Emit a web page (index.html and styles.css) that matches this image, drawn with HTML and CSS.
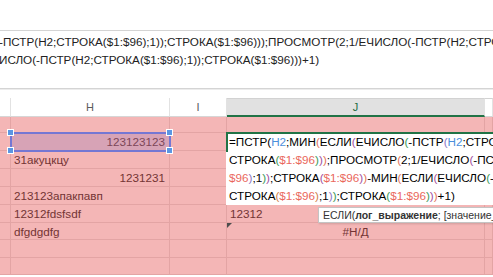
FILE: index.html
```html
<!DOCTYPE html>
<html lang="ru">
<head>
    <meta charset="UTF-8">
    <title>Лист1</title>
    <link rel="stylesheet" href="styles.css">
</head>
<body>
    <div class="sheet">
        <div class="ribbon-space"></div>

        <div class="formula-bar">
            <div class="fx-line">-ПСТР(H2;СТРОКА($1:$96);1));СТРОКА($1:$96)));ПРОСМОТР(2;1/ЕЧИСЛО(-ПСТР(H2;СТРОКА($1:$96);1));</div>
            <div class="fx-line">ИСЛО(-ПСТР(H2;СТРОКА($1:$96);1));СТРОКА($1:$96)))+1)</div>
        </div>

        <div class="grid">
            <div class="hdr"></div>
            <div class="hdr">H</div>
            <div class="hdr">I</div>
            <div class="hdr selected">J</div>
            <div class="hdr last"></div>

            <!-- row 1 -->
            <div class="cell"></div><div class="cell"></div><div class="cell"></div><div class="cell"></div><div class="cell"></div>

            <!-- row 2 -->
            <div class="cell"></div>
            <div class="cell num ref">
                123123123
                <span class="handle tl"></span>
                <span class="handle tr"></span>
                <span class="handle bl"></span>
                <span class="handle br"></span>
            </div>
            <div class="cell"></div><div class="cell"></div><div class="cell"></div>

            <!-- row 3 -->
            <div class="cell"></div>
            <div class="cell">31акуцкцу</div>
            <div class="cell"></div><div class="cell"></div><div class="cell"></div>

            <!-- row 4 -->
            <div class="cell"></div>
            <div class="cell num">1231231</div>
            <div class="cell"></div><div class="cell"></div><div class="cell"></div>

            <!-- row 5 -->
            <div class="cell"></div>
            <div class="cell">213123апакпавп</div>
            <div class="cell"></div><div class="cell"></div><div class="cell"></div>

            <!-- row 6 -->
            <div class="cell"></div>
            <div class="cell">12312fdsfsdf</div>
            <div class="cell"></div>
            <div class="cell">12312</div>
            <div class="cell"></div>

            <!-- row 7 -->
            <div class="cell"></div>
            <div class="cell">dfgdgdfg</div>
            <div class="cell"></div>
            <div class="cell center err">#Н/Д</div>
            <div class="cell"></div>

            <!-- rows 8-9 -->
            <div class="cell"></div><div class="cell"></div><div class="cell"></div><div class="cell"></div><div class="cell"></div>
            <div class="cell"></div><div class="cell"></div><div class="cell"></div><div class="cell"></div><div class="cell"></div>
        </div>

        <div class="edit-box">
            <div class="edit-line">=ПСТР<span class="p1">(</span><span class="r1">H2</span>;МИН<span class="p2">(</span>ЕСЛИ<span class="p3">(</span>ЕЧИСЛО<span class="p4">(</span>-ПСТР<span class="p5">(</span><span class="r1">H2</span>;СТРОКА<span class="p6">(</span><span class="r2">$1:$96</span><span class="p6">)</span>;1<span class="p5">)</span><span class="p4">)</span>;</div>
            <div class="edit-line">СТРОКА<span class="p4">(</span><span class="r2">$1:$96</span><span class="p4">)</span><span class="p3">)</span><span class="p2">)</span>;ПРОСМОТР<span class="p2">(</span>2;1/ЕЧИСЛО<span class="p3">(</span>-ПСТР<span class="p4">(</span><span class="r1">H2</span>;СТРОКА<span class="p5">(</span><span class="r2">$1:</span></div>
            <div class="edit-line"><span class="r2">$96</span><span class="p5">)</span>;1<span class="p4">)</span><span class="p3">)</span>;СТРОКА<span class="p3">(</span><span class="r2">$1:$96</span><span class="p3">)</span><span class="p2">)</span>-МИН<span class="p2">(</span>ЕСЛИ<span class="p3">(</span>ЕЧИСЛО<span class="p4">(</span>-ПСТР<span class="p5">(</span><span class="r1">H2</span>;</div>
            <div class="edit-line">СТРОКА<span class="p6">(</span><span class="r2">$1:$96</span><span class="p6">)</span>;1<span class="p5">)</span><span class="p4">)</span>;СТРОКА<span class="p4">(</span><span class="r2">$1:$96</span><span class="p4">)</span><span class="p3">)</span><span class="p2">)</span>+1<span class="p1">)</span></div>
        </div>

        <div class="tooltip">ЕСЛИ(<b>лог_выражение</b>; [значение_если_истина]; [значение_если_ложь])</div>
    </div>
</body>
</html>
```

FILE: styles.css
```css
* {
    margin: 0;
    padding: 0;
    box-sizing: border-box;
}

body {
    background-color: #fff;
    font-family: 'Liberation Sans', Arial, sans-serif;
    font-size: 11.7px;
    color: #000;
    overflow: hidden;
}

.sheet {
    position: relative;
    width: 493px;
    height: 277px;
    overflow: hidden;
}

.ribbon-space {
    height: 30px;
}

/* formula bar */
.formula-bar {
    height: 59px;
    border-top: 1px solid #d4d4d4;
    border-bottom: 1px solid #d4d4d4;
    padding-top: 2px;
    box-shadow: 0 1px 0 #ececec;
}

.fx-line {
    white-space: nowrap;
    line-height: 18px;
    margin-left: -1px;
    color: #222;
}

/* grid */
.grid {
    margin-top: 9px;
    display: grid;
    grid-template-columns: 11px 159px 57px 258px 1fr;
    grid-template-rows: 19px 16px repeat(5, 18px) 17px 18px 17px;
}

.hdr {
    border-right: 1px solid #e2e2e2;
    border-bottom: 1px solid #d6d6d6;
    text-align: center;
    line-height: 19px;
    color: #5a5a5a;
    font-size: 11px;
}

.hdr.selected {
    background-color: #e1e1e1;
    border-top: 1px solid #d2d2d2;
    border-bottom: 2px solid #217346;
    color: #1f6b41;
    line-height: 16px;
}

.hdr.last {
    border-top: 1px solid #d2d2d2;
}

.cell {
    position: relative;
    background-color: #f4b6b6;
    border-right: 1px solid #e3a4a4;
    border-bottom: 1px solid #e3a4a4;
    line-height: 17px;
    padding: 0 3px;
    color: #733434;
    white-space: nowrap;
}

.cell.num {
    text-align: right;
    padding-right: 4px;
}

.cell.center {
    text-align: center;
}

.cell.ref {
    background-color: #d7a3b6;
    outline: 2px solid #7477d3;
    outline-offset: -1px;
    color: #7c4658;
    z-index: 1;
}

.handle {
    position: absolute;
    width: 7px;
    height: 7px;
    background-color: #5b96e2;
    border: 1px solid #fff;
}

.handle.tl { left: -4px; top: -4px; }
.handle.tr { right: -4px; top: -4px; }
.handle.bl { left: -4px; bottom: -4px; }
.handle.br { right: -4px; bottom: -4px; }

.cell.err::before {
    content: '';
    position: absolute;
    left: 0;
    top: 0;
    border-top: 5px solid #4d4d4d;
    border-right: 5px solid transparent;
}

/* cell in edit mode */
.edit-box {
    position: absolute;
    left: 226px;
    top: 132px;
    width: 300px;
    height: 73px;
    background-color: #fff;
    border-top: 2px solid #217346;
    padding-left: 3px;
    z-index: 2;
}

.edit-box::before {
    content: '';
    position: absolute;
    left: 0;
    top: -2px;
    width: 2px;
    height: 20px;
    background-color: #217346;
}

.edit-line {
    white-space: nowrap;
    line-height: 18px;
}

.edit-line:first-child {
    margin-top: -1px;
}

.r1 { color: #4b8fdc; }
.r2 { color: #ea675c; }
.p1 { color: #000; }
.p2 { color: #e3735a; }
.p3 { color: #a2519f; }
.p4 { color: #3c9a58; }
.p5 { color: #8c78c6; }
.p6 { color: #cf7f4a; }

.tooltip {
    position: absolute;
    left: 318px;
    top: 207px;
    height: 16px;
    padding: 0 4px;
    background-color: #fff;
    border: 1px solid #c4c4c4;
    box-shadow: 1px 1px 2px rgba(0, 0, 0, 0.15);
    font-size: 10.5px;
    line-height: 14px;
    white-space: nowrap;
    color: #333;
    z-index: 3;
}
```
